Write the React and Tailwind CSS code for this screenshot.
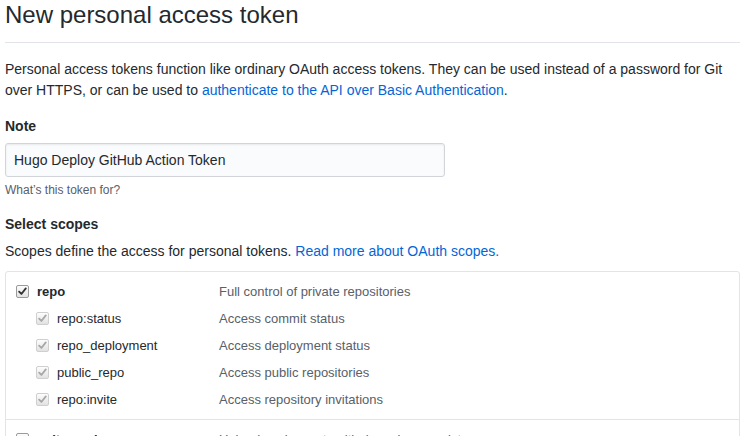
const subScopes = [
  { name: "repo:status", desc: "Access commit status" },
  { name: "repo_deployment", desc: "Access deployment status" },
  { name: "public_repo", desc: "Access public repositories" },
  { name: "repo:invite", desc: "Access repository invitations" },
];

const Check = ({ checked, disabled }) => (
  <span
    className={`relative inline-flex w-[13px] h-[13px] rounded-[2px] border ${
      disabled ? "border-[#cfcfcf]" : "border-[#9a9a9a]"
    } bg-gradient-to-b from-[#fdfdfd] to-[#e2e2e2] shrink-0`}
  >
    {checked && (
      <svg
        viewBox="0 0 12 12"
        className="absolute left-[0px] top-[0px] w-[11px] h-[11px]"
      >
        <path
          d="M2.3 6.2 L4.8 8.7 L9.6 2.6"
          fill="none"
          stroke={disabled ? "#a8a8a8" : "#333"}
          strokeWidth="2"
          strokeLinecap="round"
          strokeLinejoin="round"
        />
      </svg>
    )}
  </span>
);

const App = () => {
  return (
    <div className="w-[735px] ml-[5px] text-[14px] leading-[21px] text-[#24292e] font-['Liberation_Sans',Arial,sans-serif] bg-white">
      {/* Header */}
      <div className="border-b border-[#e1e4e8] pb-[12px]">
        <h2 className="text-[24px] leading-[30px] font-normal">
          New personal access token
        </h2>
      </div>

      <p className="mt-[16px]">
        Personal access tokens function like ordinary OAuth access tokens. They
        can be used instead of a password for Git over HTTPS, or can be used to{" "}
        <a className="text-[#0366d6]">
          authenticate to the API over Basic Authentication
        </a>
        .
      </p>

      {/* Note */}
      <div className="mt-[15px]">
        <label className="block font-bold">Note</label>
        <div className="mt-[6px] w-[440px] h-[34px] flex items-center px-[8px] bg-[#fafbfc] border border-[#d1d5da] rounded-[3px] shadow-[inset_0_1px_2px_rgba(27,31,35,0.075)]">
          Hugo Deploy GitHub Action Token
        </div>
        <p className="mt-[4px] text-[12px] leading-[18px] text-[#586069]">
          What’s this token for?
        </p>
      </div>

      {/* Scopes */}
      <div className="mt-[15px]">
        <p className="font-bold">Select scopes</p>
        <p className="mt-[6px]">
          Scopes define the access for personal tokens.{" "}
          <a className="text-[#0366d6]">Read more about OAuth scopes.</a>
        </p>
      </div>

      <div className="mt-[9px] border border-[#e1e4e8] rounded-t-[3px] text-[13px] leading-[20px]">
        <div className="pt-[6px] pb-[6px] border-b border-[#e1e4e8]">
          <div className="flex items-center h-[27px] pl-[10px]">
            <Check checked />
            <span className="ml-[8px] w-[182px] font-bold">repo</span>
            <span className="text-[#586069]">Full control of private repositories</span>
          </div>
          {subScopes.map((s) => (
            <div key={s.name} className="flex items-center h-[27px] pl-[30px]">
              <Check checked disabled />
              <span className="ml-[8px] w-[162px]">{s.name}</span>
              <span className="text-[#586069]">{s.desc}</span>
            </div>
          ))}
        </div>
        <div className="pt-[6px] pb-[6px]">
          <div className="flex items-center h-[27px] pl-[10px]">
            <Check />
            <span className="ml-[8px] w-[182px] font-bold">write:packages</span>
            <span className="text-[#586069]">
              Upload packages to github package registry
            </span>
          </div>
        </div>
      </div>
    </div>
  );
};

export default App;
